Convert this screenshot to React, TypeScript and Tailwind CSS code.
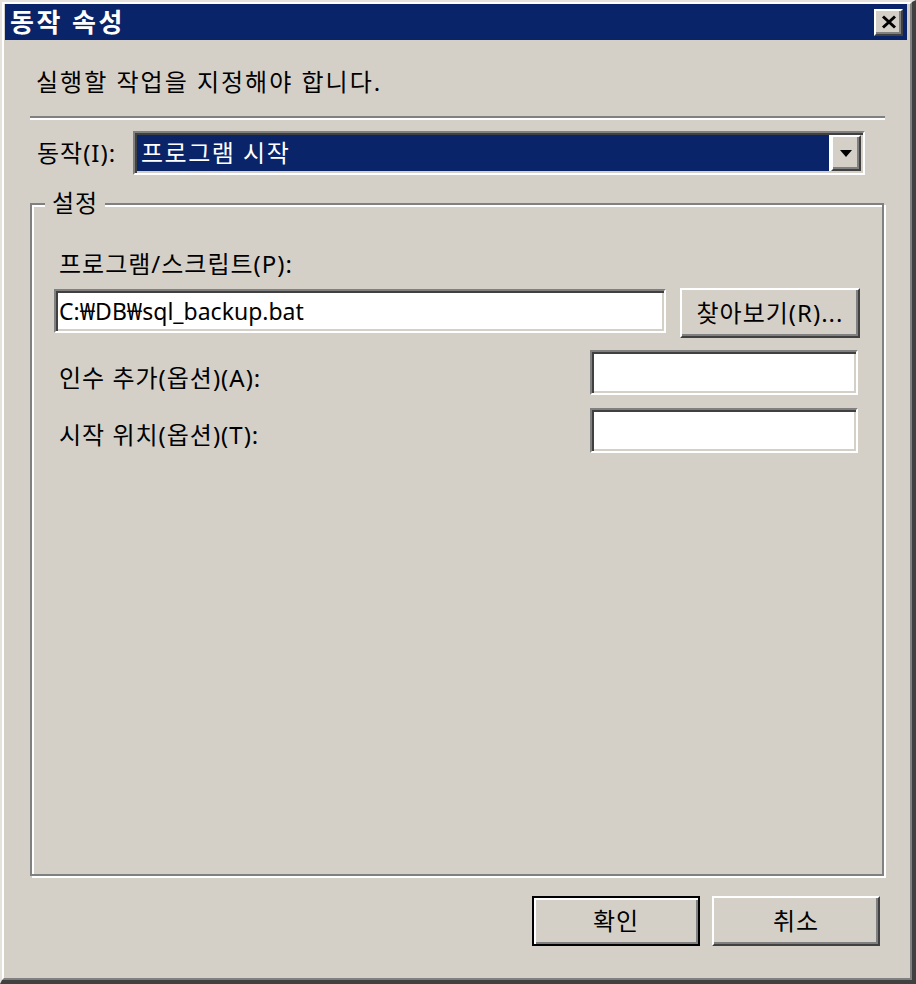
import React from 'react';

// Classic Windows "동작 속성" dialog
const raised = 'border-2 border-t-white border-l-white border-r-[#404040] border-b-[#404040] shadow-[inset_-2px_-2px_0_#808080] bg-[#d4d0c8]';
const sunken = 'border-2 border-t-[#808080] border-l-[#808080] border-r-white border-b-white shadow-[inset_2px_2px_0_#404040,inset_-2px_-2px_0_#d4d0c8] bg-white';
const label = 'text-[24px] leading-[30px] tracking-[1px]';

const TextBox: React.FC<{ className?: string; value?: string }> = ({ className = '', value }) => (
    <div className={`${sunken} ${className} flex items-center pl-[3px] text-[23px] leading-[28px] text-black`}>
        {value}
    </div>
);

const App: React.FC = () => {
    return (
        <div className="w-[916px] h-[984px] bg-[#d4d0c8] font-['Noto_Sans','Noto_Sans_CJK_KR',sans-serif] text-black border-l-2 border-t-2 border-l-[#e6e3de] border-t-[#e6e3de] border-r-4 border-b-4 border-r-[#404040] border-b-[#404040]">
            <div className="h-full flex flex-col border-2 border-t-white border-l-white border-r-[#808080] border-b-[#808080] pl-px pr-[3px]">
                {/* title bar */}
                <div className="h-[36px] bg-[#0a246a] flex items-center justify-between pl-[5px] pr-[4px]">
                    <span className="text-white font-bold text-[26px] leading-[30px] tracking-[2.5px]">동작 속성</span>
                    <div className={`${raised} w-[29px] h-[27px] flex items-center justify-center`}>
                        <svg width="16" height="14" viewBox="0 0 16 14">
                            <path d="M2 1.5 L14 12.5 M14 1.5 L2 12.5" stroke="#000" strokeWidth="3" />
                        </svg>
                    </div>
                </div>

                <div className="flex-1 flex flex-col pl-[25px] pr-[22px]">
                    <p className="mt-[27px] ml-[6px] text-[24px] leading-[30px] tracking-[2px]">실행할 작업을 지정해야 합니다.</p>

                    <div className="mt-[19px] border-t-2 border-b-2 border-t-[#808080] border-b-white" />

                    {/* action combo */}
                    <div className="mt-[11px] flex items-center">
                        <span className={`w-[103px] pl-[7px] ${label}`}>동작(I):</span>
                        <div className={`${sunken} w-[732px] h-[44px] flex items-stretch p-[2px]`}>
                            <div className="flex-1 bg-[#0a246a] text-white flex items-center pl-[4px] mr-[2px] text-[24px] leading-[30px] tracking-[1.5px]">프로그램 시작</div>
                            <div className={`${raised} w-[30px] flex items-center justify-center`}>
                                <svg width="12" height="7" viewBox="0 0 12 7">
                                    <path d="M0 0 H12 L6 7 Z" fill="#000" />
                                </svg>
                            </div>
                        </div>
                    </div>

                    {/* settings group */}
                    <div className="relative mt-[28px] h-[673px] w-[854px] border-2 border-[#808080] shadow-[inset_2px_2px_0_#fff,2px_2px_0_#fff] pl-[22px] pr-[22px]">
                        <span className={`absolute -top-[17px] left-[13px] px-[7px] bg-[#d4d0c8] ${label}`}>설정</span>

                        <p className={`mt-[44px] ml-[5px] ${label}`}>프로그램/스크립트(P):</p>

                        <div className="mt-[9px] flex items-start">
                            <TextBox className="w-[612px] h-[44px] mt-px" value="C:₩DB₩sql_backup.bat" />
                            <button className={`${raised} ml-[14px] w-[180px] h-[50px] ${label}`}>찾아보기(R)...</button>
                        </div>

                        <div className="mt-[12px] flex items-start justify-between pr-[2px]">
                            <span className={`mt-[13px] ml-[5px] ${label}`}>인수 추가(옵션)(A):</span>
                            <TextBox className="w-[268px] h-[45px]" />
                        </div>

                        <div className="mt-[13px] flex items-start justify-between pr-[2px]">
                            <span className={`mt-[12px] ml-[5px] ${label}`}>시작 위치(옵션)(T):</span>
                            <TextBox className="w-[268px] h-[45px]" />
                        </div>
                    </div>

                    {/* dialog buttons */}
                    <div className="mt-[20px] flex justify-end gap-[12px] pr-[5px]">
                        <button className={`w-[168px] h-[50px] bg-[#d4d0c8] border-2 border-black shadow-[inset_2px_2px_0_#fff,inset_-2px_-2px_0_#808080] ${label}`}>확인</button>
                        <button className={`${raised} w-[168px] h-[50px] ${label}`}>취소</button>
                    </div>
                </div>
            </div>
        </div>
    );
};

export default App;
